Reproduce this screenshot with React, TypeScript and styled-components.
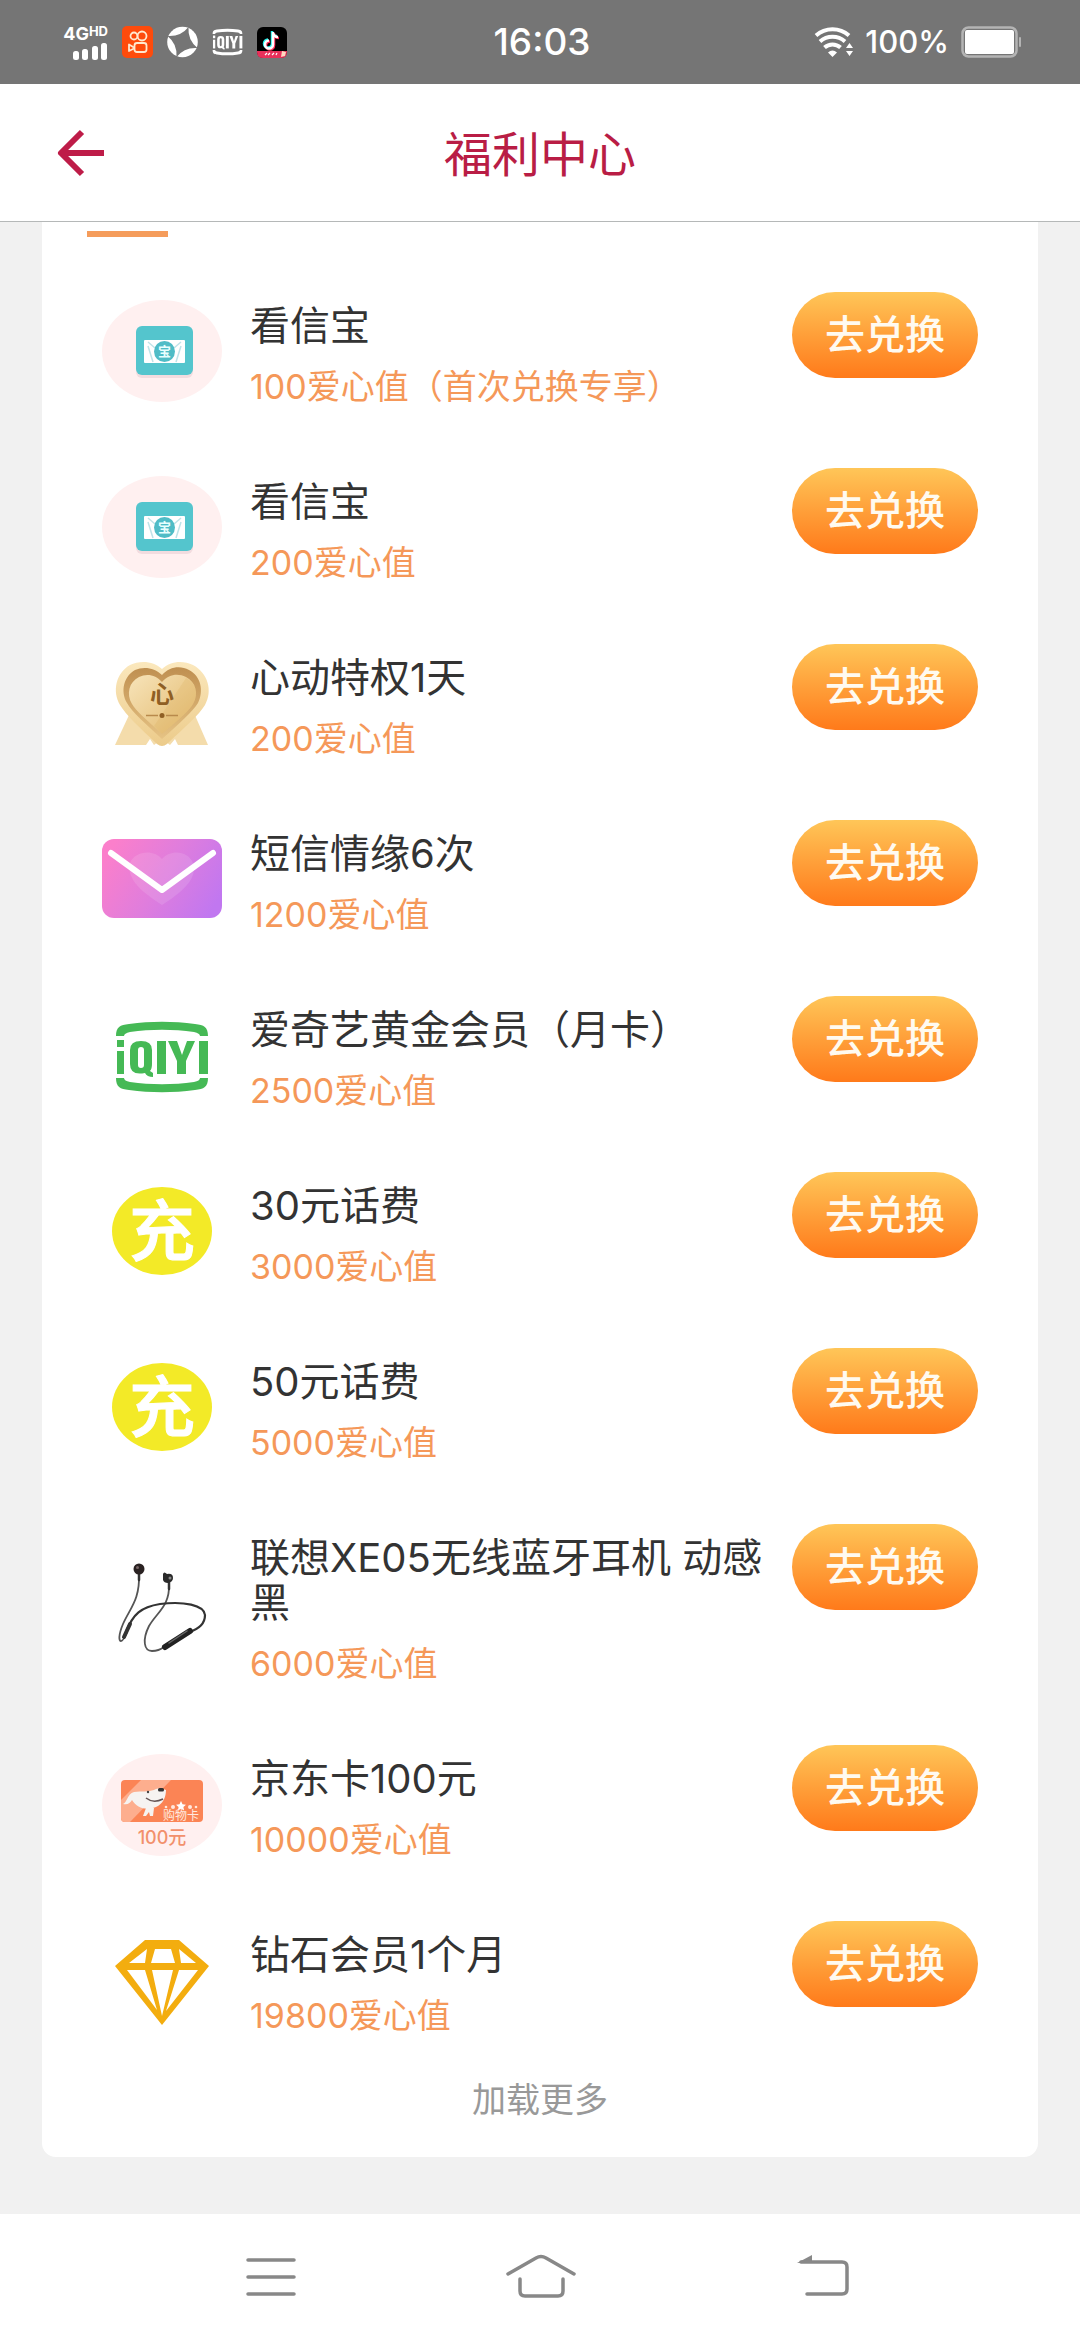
import React from "react";
import styled, { createGlobalStyle } from "styled-components";

const FONT = `Inter, "Noto Sans CJK SC", "Noto Sans", sans-serif`;

const GlobalStyle = createGlobalStyle`
  *, *::before, *::after { box-sizing: border-box; }
  body { margin: 0; background: #f1f1f1; font-family: ${FONT}; }
  button { font-family: inherit; border: 0; padding: 0; background: none; cursor: pointer; }
  h1, h2, p, ul { margin: 0; padding: 0; font-weight: 400; }
  svg { display: block; }
`;

const Page = styled.div`
  min-height: 100vh;
  display: flex;
  flex-direction: column;
`;

const StatusBar = styled.div`
  display: grid;
  grid-template-columns: 1fr auto 1fr;
  align-items: center;
  height: 84px;
  padding: 0 58px 0 62px;
  background: #757575;
  color: #fff;
`;

const StatusIcons = styled.div`
  display: flex;
  align-items: center;
  gap: 14px;
`;

const NetworkBadge = styled.div`
  display: flex;
  flex-direction: column;
  align-items: flex-end;
  width: 46px;
`;

const NetworkLabel = styled.div`
  display: flex;
  align-items: flex-start;
  font-size: 18px;
  line-height: 18px;
  font-weight: 700;
`;

const NetworkSuffix = styled.span`
  font-size: 13px;
  line-height: 13px;
`;

const StatusInfo = styled.div`
  display: flex;
  align-items: center;
  justify-content: flex-end;
  gap: 12px;
`;

const Clock = styled.time`
  font-size: 37px;
  line-height: 44px;
  font-weight: 500;
`;

const Percent = styled.span`
  font-size: 31px;
  line-height: 36px;
  font-weight: 500;
`;

const Header = styled.header`
  display: grid;
  grid-template-columns: 1fr auto 1fr;
  align-items: center;
  height: 138px;
  padding: 0 56px;
  background: #fff;
  border-bottom: 1px solid #b5b8b8;
`;

const BackButton = styled.button`
  justify-self: start;
`;

const Title = styled.h1`
  padding-top: 4px;
  font-size: 48px;
  line-height: 64px;
  color: #b91d45;
`;

const Main = styled.main`
  flex: 1;
  padding: 0 42px 57px;
`;

const Card = styled.section`
  display: flex;
  flex-direction: column;
  padding: 0 60px 25px;
  background: #fff;
  border-radius: 0 0 14px 14px;
`;

const TabIndicator = styled.div`
  width: 81px;
  height: 15px;
  margin: 0 0 26px -15px;
  border-bottom: 6px solid #f59c5b;
`;

const List = styled.ul`
  list-style: none;
`;

const Row = styled.li`
  display: grid;
  grid-template-columns: 120px 1fr 186px;
  column-gap: 28px;
  align-items: start;
  padding: 29px 0;
`;

const Thumb = styled.div`
  align-self: center;
`;

const Info = styled.div`
  min-height: 118px;
  padding: 11px 0 3px;
`;

const Name = styled.h2`
  font-size: 40px;
  line-height: 45px;
  color: #333;
`;

const Cost = styled.p`
  margin-top: 19px;
  font-size: 34px;
  line-height: 40px;
  color: #f59859;
`;

const Redeem = styled.button`
  height: 86px;
  border-radius: 43px;
  background: linear-gradient(180deg, #ffc658 0%, #ff9f39 50%, #ff7a1a 100%);
  color: #fffaf0;
  font-size: 40px;
  line-height: 60px;
  font-weight: 500;
`;

const LoadMore = styled.button`
  align-self: center;
  font-size: 34px;
  line-height: 64px;
  color: #999;
`;

const NavBar = styled.nav`
  display: flex;
  justify-content: space-between;
  align-items: center;
  height: 126px;
  padding: 0 221px;
  background: #fff;
`;

const NavButton = styled.button`
  width: 100px;
  height: 60px;
`;

/* ---------- item artwork, all on a 120 x 104 board ---------- */

const Board = ({ children }: { children: React.ReactNode }) => (
  <svg width="120" height="104" viewBox="0 0 120 104" fontFamily={FONT} aria-hidden="true">
    {children}
  </svg>
);

const LetterArt = () => (
  <Board>
    <ellipse cx="60" cy="52" rx="60" ry="51" fill="#fff0f0" />
    <rect x="34" y="29" width="57" height="50" rx="6" fill="#e9cfd3" opacity="0.6" />
    <rect x="34" y="27" width="57" height="49" rx="6" fill="#54c5cd" />
    <rect x="42" y="41" width="41" height="23" rx="1" fill="#fff" />
    <path d="M46 43l7 6M79 43l-7 6M46 47l5 16M79 47l-5 16" stroke="#bfe3e8" strokeWidth="1.5" fill="none" />
    <circle cx="62.5" cy="52.5" r="10.5" fill="#4fbcc6" />
    <text x="62.5" y="57" fontSize="13" fontWeight="700" fill="#e8ffff" textAnchor="middle">宝</text>
  </Board>
);

const HeartArt = () => (
  <Board>
    <defs>
      <linearGradient id="heartOuter" x1="0" y1="0" x2="0" y2="1">
        <stop offset="0" stopColor="#fbe8bd" />
        <stop offset="1" stopColor="#eccb8a" />
      </linearGradient>
      <linearGradient id="heartInner" x1="0" y1="0" x2="1" y2="1">
        <stop offset="0" stopColor="#f7e4ba" />
        <stop offset="1" stopColor="#e2b86b" />
      </linearGradient>
      <linearGradient id="heartRim" x1="0" y1="0" x2="0" y2="1">
        <stop offset="0" stopColor="#bf8f50" />
        <stop offset="1" stopColor="#e6c384" />
      </linearGradient>
    </defs>
    <path d="M28 62L13 94h31l4-6 4 6 8-6 8 6 5-6 3 6h30L92 62z" fill="#f4dcab" />
    <path d="M60 18C68 10 81 9 91 14c15 8 20 26 12 40-6 10-20 22-38 39q-5 4-10 0C37 76 24 64 18 54 10 40 14 22 28 14c10-5 24-4 32 4z" fill="url(#heartOuter)" />
    <path d="M60 24C67 16 78 14 87 19c12 6 15 21 9 33-5 8-18 20-36 36C43 72 30 61 25 52c-7-12-3-27 8-33 9-4 20-2 27 5z" fill="url(#heartRim)" />
    <path d="M60 31c7-8 16-9 24-5 10 5 13 17 7 27-4 7-15 16-31 30C45 69 34 60 30 53c-6-10-3-22 7-27 8-4 17-2 23 5z" fill="url(#heartInner)" />
    <path d="M84 27c10 5 13 16 7 26-4 7-15 16-31 30l-8-8z" fill="#dcae60" opacity="0.25" />
    <text x="60" y="52" fontSize="24" fontWeight="700" fill="#8f5f24" textAnchor="middle">心</text>
    <path d="M44 64.5h12M64 64.5h12" stroke="#b98a4c" strokeWidth="1.5" />
    <circle cx="60" cy="64.5" r="2.5" fill="#8f5f24" />
  </Board>
);

const EnvelopeArt = () => (
  <Board>
    <defs>
      <linearGradient id="envelope" x1="0" y1="0.3" x2="1" y2="0.7">
        <stop offset="0" stopColor="#fb7fcb" />
        <stop offset="0.5" stopColor="#df7ddd" />
        <stop offset="1" stopColor="#c177f0" />
      </linearGradient>
    </defs>
    <rect y="12" width="120" height="79" rx="12" fill="url(#envelope)" />
    <path d="M60 32c9-10 26-8 31 4 4 12-5 22-13 29-6 5-12 9-18 13-6-4-12-8-18-13-8-7-17-17-14-29 5-12 23-14 32-4z" fill="#fff" opacity="0.12" />
    <path d="M9 26l51 37 51-37" fill="none" stroke="#fff" strokeWidth="6" strokeLinecap="round" strokeLinejoin="round" />
  </Board>
);

const IqiyiShapes = () => (
  <>
    <path d="M14 33c0-9 4-11 13-12 22-3 44-3 66 0 9 1 13 3 13 12h-8c0-2-2-3-6-4-21-3-43-3-64 0-4 1-6 2-6 4z" />
    <path d="M14 75c0 9 4 11 13 12 22 3 44 3 66 0 9-1 13-3 13-12h-8c0 2-2 3-6 4-21 3-43 3-64 0-4-1-6-2-6-4z" />
    <rect x="15" y="37" width="7" height="7" />
    <rect x="15" y="48" width="7" height="23" />
    <path fillRule="evenodd" d="M28 47q0-9 11-9t11 9v14q0 5-2 7l3 2v4q-6 0-8-4-15 3-15-9zM36 47v15q0 3 3 3t3-3V47q0-3-3-3t-3 3z" />
    <rect x="55" y="38" width="9" height="33" />
    <path d="M66 38h9l5 14 5-14h8L84 58v13h-9V58z" />
    <rect x="97" y="38" width="9" height="33" />
  </>
);

const IqiyiArt = () => (
  <Board>
    <g fill="#45b955">
      <IqiyiShapes />
    </g>
  </Board>
);

const TopUpArt = () => (
  <Board>
    <ellipse cx="60" cy="52" rx="50" ry="44" fill="#f3ea27" />
    <text x="60" y="76" fontSize="66" fontWeight="500" fill="#fff" stroke="#fff" textAnchor="middle">充</text>
  </Board>
);

const EarphoneArt = () => (
  <Board>
    <g fill="none" strokeLinecap="round" transform="translate(0 2)">
      <path d="M37 18C38 44 28 52 21 68c-5 12-4 17-2 17s4-4 6-9" stroke="#555" strokeWidth="1.8" />
      <path d="M67 28c1 22-12 28-20 42-7 14-5 25 3 25 4 0 8-1 12-4" stroke="#555" strokeWidth="1.8" />
      <path d="M24 76C31 58 39 51 58 48c24-3 44 1 45 11 0 8-6 14-16 17" stroke="#333" strokeWidth="2.2" />
      <path d="M22 81l6-13" stroke="#333" strokeWidth="4" />
      <path d="M63 91l25-16" stroke="#222" strokeWidth="6" />
      <path d="M67 87l18-12" stroke="#666" strokeWidth="1.5" />
      <path d="M37 17v7M67 25v8" stroke="#333" strokeWidth="2.5" />
      <circle cx="37" cy="13" r="5.5" fill="#2a2222" />
      <circle cx="35.5" cy="11.5" r="1.5" fill="#776666" />
      <path d="M61 18q1-3 4 0 6-1 6 4 0 4-5 5-4 0-5-3z" fill="#2a2a2a" />
      <circle cx="68" cy="22" r="1.5" fill="#888" />
    </g>
  </Board>
);

const GiftCardArt = () => (
  <Board>
    <ellipse cx="60" cy="53" rx="60" ry="51" fill="#fff0f0" />
    <rect x="19" y="28" width="82" height="42" rx="4" fill="#fb8455" />
    <path d="M39 28h30L28 70h-5q-4 0-4-4V48z" fill="#fdae8e" />
    <path d="M21 52c4-1 4-10 11-12 8-1 14 0 20-2 5-3 9-1 12 0 0 7-3 14-10 17-10 4-19 1-24-7-2 3-4 5-9 4z" fill="#f6f3f1" />
    <path d="M44 56h8l-1 8h-3l-1-4-3 4h-3z" fill="#f6f3f1" />
    <path d="M44 46c5 4 11 4 17 1" fill="none" stroke="#665555" strokeWidth="1.5" />
    <rect x="56" y="36" width="6" height="3.5" rx="1.5" fill="#333" />
    <circle cx="46" cy="40" r="1.2" fill="#444" />
    <path d="M79 49l1.5 3.3 3.5.4-2.600 2.300.7 3.500-3.100-1.800-3.100 1.800.7-3.500-2.600-2.300 3.500-.4z" fill="#fff" />
    <g fill="#ffe8dd">
      <circle cx="64" cy="55" r="1.3" />
      <circle cx="71" cy="55" r="2" />
      <circle cx="88" cy="55" r="2" />
      <circle cx="94" cy="55" r="1.3" />
    </g>
    <text x="79" y="68" fontSize="12" fill="#ffe9df" textAnchor="middle">购物卡</text>
    <text x="60" y="92" fontSize="18" fill="#f2906c" textAnchor="middle" fontWeight="500">100元</text>
  </Board>
);

const DiamondArt = () => (
  <Board>
    <path
      fill="#f3ad0f"
      fillRule="evenodd"
      d="M43 12h34l30 26-47 59L13 38zM45 21L27 35h16zM53 21l-4 14h24l-4-14zM77 21l2 14h15zM25 42l30 40-12-40zM50 42l10 46 11-46zM77 42L64 83l32-41z"
    />
  </Board>
);

/* ---------- data ---------- */

type Item = { name: string; cost: string; Art: () => React.ReactElement };

const items: Item[] = [
  { name: "看信宝", cost: "100爱心值（首次兑换专享）", Art: LetterArt },
  { name: "看信宝", cost: "200爱心值", Art: LetterArt },
  { name: "心动特权1天", cost: "200爱心值", Art: HeartArt },
  { name: "短信情缘6次", cost: "1200爱心值", Art: EnvelopeArt },
  { name: "爱奇艺黄金会员（月卡）", cost: "2500爱心值", Art: IqiyiArt },
  { name: "30元话费", cost: "3000爱心值", Art: TopUpArt },
  { name: "50元话费", cost: "5000爱心值", Art: TopUpArt },
  { name: "联想XE05无线蓝牙耳机 动感黑", cost: "6000爱心值", Art: EarphoneArt },
  { name: "京东卡100元", cost: "10000爱心值", Art: GiftCardArt },
  { name: "钻石会员1个月", cost: "19800爱心值", Art: DiamondArt },
];

/* ---------- status bar drawings ---------- */

const Network = () => (
  <NetworkBadge>
    <NetworkLabel>
      4G<NetworkSuffix>HD</NetworkSuffix>
    </NetworkLabel>
    <svg width="36" height="17" viewBox="0 0 36 17" fill="#fff">
      <rect x="1" y="8" width="6" height="9" rx="2.5" />
      <rect x="10" y="6" width="6" height="11" rx="2.5" />
      <rect x="20" y="3" width="6" height="14" rx="2.5" />
      <rect x="29" y="0" width="6" height="17" rx="2.5" />
    </svg>
  </NetworkBadge>
);

const Kuaishou = () => (
  <svg width="31" height="32" viewBox="0 0 31 32">
    <rect width="31" height="32" rx="5" fill="#fe4b0c" />
    <g fill="none" stroke="#ffe9cf" strokeWidth="1.8">
      <circle cx="12" cy="10" r="3.5" />
      <circle cx="20" cy="10" r="4.5" />
      <rect x="12.5" y="17" width="12" height="9" rx="2.5" />
      <path d="M12 21.5l-5-3v6.500l5-2.500" strokeLinejoin="round" />
    </g>
  </svg>
);

const Shutter = () => (
  <svg width="31" height="32" viewBox="-15.5 -16 31 32">
    <circle r="15.3" fill="#fff" />
    <path d="M6-15Q5-2 15 6 2 5-6 15-5 2-15-6-2-5 6-15z" fill="#757575" />
  </svg>
);

const IqiyiMark = () => (
  <svg width="31" height="28" viewBox="12 17 96 74" fill="#fff" preserveAspectRatio="none">
    <IqiyiShapes />
  </svg>
);

const Douyin = () => {
  const note = "M16 5v12.500a4 4 0 1 1-4-4M16 6q1 4 5 4";
  return (
    <svg width="30" height="31" viewBox="0 0 30 31">
      <rect width="30" height="31" rx="6" fill="#000" />
      <path d="M0 24h30v1q0 6-6 6H6q-6 0-6-6z" fill="#e8305a" />
      <g fill="none" strokeWidth="2.5">
        <path d={note} stroke="#25f4ee" transform="translate(-1 -1)" />
        <path d={note} stroke="#fe2c55" transform="translate(1 1)" />
        <path d={note} stroke="#fff" />
      </g>
      <path d="M8 28l2-2m1 2l2-2m2 2l2-2m2 2l1-2" stroke="#fff" strokeWidth="1.2" />
      <path d="M24 30l1-6 4 1-1 4z" fill="#ffd9c0" />
    </svg>
  );
};

const Wifi = () => (
  <svg width="39" height="30" viewBox="0 0 39 30">
    <g fill="none" stroke="#fff" strokeWidth="4">
      <path d="M2 8.500a25 25 0 0 1 33 0" />
      <path d="M6 14.500a19 19 0 0 1 25 0" />
      <path d="M10.500 20.500a12 12 0 0 1 16 0" />
    </g>
    <path d="M14 25.500q4.500-4 9 0L18.500 30z" fill="#fff" />
    <path d="M32 21l3.500-5 3.500 5zM32 24l3.500 5 3.500-5z" fill="#fff" />
  </svg>
);

const Battery = () => (
  <svg width="61" height="32" viewBox="0 0 61 32">
    <rect x="1.5" y="1.5" width="54" height="29" rx="6" fill="none" stroke="#b4b4b4" strokeWidth="2.5" />
    <rect x="4" y="4" width="49" height="24" rx="2" fill="#fff" />
    <rect x="58" y="11" width="2" height="10" rx="1" fill="#b4b4b4" />
  </svg>
);

/* ---------- page ---------- */

export default function App() {
  return (
    <Page>
      <GlobalStyle />
      <StatusBar>
        <StatusIcons>
          <Network />
          <Kuaishou />
          <Shutter />
          <IqiyiMark />
          <Douyin />
        </StatusIcons>
        <Clock>16:03</Clock>
        <StatusInfo>
          <Wifi />
          <Percent>100%</Percent>
          <Battery />
        </StatusInfo>
      </StatusBar>

      <Header>
        <BackButton type="button" aria-label="返回">
          <svg width="50" height="48" viewBox="0 0 50 48" fill="none" stroke="#be1c48" strokeWidth="6">
            <path d="M26 3L5 24l21 21" strokeLinejoin="round" />
            <path d="M6 24h42" />
          </svg>
        </BackButton>
        <Title>福利中心</Title>
      </Header>

      <Main>
        <Card>
          <TabIndicator />
          <List>
            {items.map(({ name, cost, Art }) => (
              <Row key={name + cost}>
                <Thumb>
                  <Art />
                </Thumb>
                <Info>
                  <Name>{name}</Name>
                  <Cost>{cost}</Cost>
                </Info>
                <Redeem type="button">去兑换</Redeem>
              </Row>
            ))}
          </List>
          <LoadMore type="button">加载更多</LoadMore>
        </Card>
      </Main>

      <NavBar>
        <NavButton type="button" aria-label="最近任务">
          <svg width="100" height="60" viewBox="0 0 100 60" stroke="#888" strokeWidth="3.5" strokeLinecap="round">
            <path d="M27 13h46M27 30h46M27 47h46" />
          </svg>
        </NavButton>
        <NavButton type="button" aria-label="主页">
          <svg width="100" height="60" viewBox="0 0 100 60" fill="none" stroke="#888" strokeWidth="3.5" strokeLinecap="round">
            <path d="M18 27L46 11q5-3 10 0l28 16" />
            <path d="M30 32v12q0 5 5 5h33q5 0 5-5V32" />
          </svg>
        </NavButton>
        <NavButton type="button" aria-label="返回上一页">
          <svg width="100" height="60" viewBox="0 0 100 60" fill="none" stroke="#888" strokeWidth="3.5" strokeLinecap="round">
            <path d="M42 15h41q5 0 5 5v22q0 5-5 5H48" />
            <path d="M38 16l15-8v8z" fill="#888" stroke="none" />
          </svg>
        </NavButton>
      </NavBar>
    </Page>
  );
}
